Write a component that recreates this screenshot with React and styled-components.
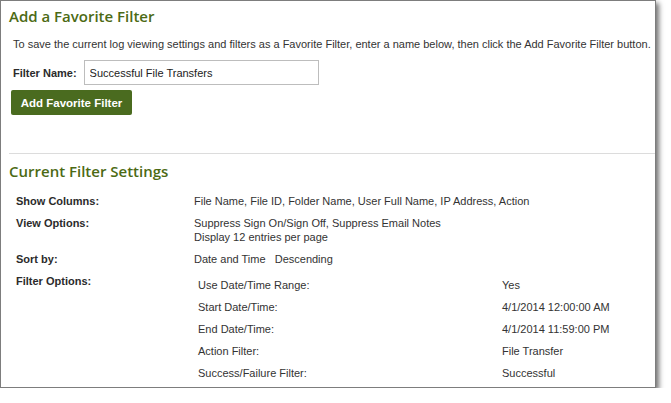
import React from 'react';
import styled, { createGlobalStyle } from 'styled-components';

const GlobalStyle = createGlobalStyle`
    body {
        margin: 0;
        background: #ffffff;
        font-family: "Liberation Sans", Arial, sans-serif;
        color: #333333;
    }
`

const Panel = styled.div`
    width: 654px;
    height: 386px;
    border: 1px solid #7d7d7d;
    box-shadow: 3px 3px 5px rgba(0, 0, 0, 0.55);
    background: #ffffff;
    overflow: hidden;
`

const Section = styled.div`
    padding: ${props => props.top}px 0 0 8px;
`

const Heading = styled.h2`
    margin: 0;
    font-family: "Open Sans", "DejaVu Sans", sans-serif;
    font-size: 15px;
    font-weight: 600;
    line-height: 18px;
    color: #4c6a14;
`

const Description = styled.p`
    margin: 12px 0 0 4px;
    font-size: 11px;
    line-height: 14px;
`

const FormRow = styled.div`
    display: flex;
    align-items: center;
    gap: 7px;
    margin: 9px 0 0 4px;
`

const Label = styled.label`
    font-size: 11px;
    font-weight: bold;
    color: #2b2b2b;
`

const NameInput = styled.input`
    box-sizing: border-box;
    width: 235px;
    height: 25px;
    padding: 0 5px;
    border: 1px solid #bdbdbd;
    font-family: "Liberation Sans", Arial, sans-serif;
    font-size: 11px;
    color: #222222;
    outline: none;
`

const AddButton = styled.button`
    display: block;
    margin: 5px 0 0 2px;
    width: 121px;
    height: 25px;
    border: none;
    border-radius: 2px;
    background: #4a6b1f;
    color: #ffffff;
    font-family: "Liberation Sans", Arial, sans-serif;
    font-size: 11.5px;
    font-weight: bold;
    cursor: pointer;
`

const Divider = styled.hr`
    margin: 38px 0 0 8px;
    border: none;
    border-top: 1px solid #dcdcdc;
`

const Settings = styled.div`
    display: grid;
    grid-template-columns: 178px 1fr;
    row-gap: 8px;
    margin: 14px 0 0 7px;
    font-size: 11px;
    line-height: 14px;
`

const SettingLabel = styled.div`
    font-weight: bold;
    color: #2b2b2b;
`

const SettingValue = styled.div``

const Options = styled.div`
    display: grid;
    grid-template-columns: 304px 1fr;
    row-gap: 8px;
    padding: 4px 0 0 4px;
`

const filterOptions = [
    ['Use Date/Time Range:', 'Yes'],
    ['Start Date/Time:', '4/1/2014 12:00:00 AM'],
    ['End Date/Time:', '4/1/2014 11:59:00 PM'],
    ['Action Filter:', 'File Transfer'],
    ['Success/Failure Filter:', 'Successful'],
]

const App = () => {
    return (
        <>
            <GlobalStyle />
            <Panel>
                <Section top={6}>
                    <Heading>Add a Favorite Filter</Heading>
                    <Description>
                        To save the current log viewing settings and filters as a Favorite Filter, enter a name below, then click the Add Favorite Filter button.
                    </Description>
                    <FormRow>
                        <Label>Filter Name:</Label>
                        <NameInput defaultValue="Successful File Transfers" />
                    </FormRow>
                    <AddButton>Add Favorite Filter</AddButton>
                </Section>
                <Divider />
                <Section top={8}>
                    <Heading>Current Filter Settings</Heading>
                    <Settings>
                        <SettingLabel>Show Columns:</SettingLabel>
                        <SettingValue>File Name, File ID, Folder Name, User Full Name, IP Address, Action</SettingValue>
                        <SettingLabel>View Options:</SettingLabel>
                        <SettingValue>
                            Suppress Sign On/Sign Off, Suppress Email Notes<br />
                            Display 12 entries per page
                        </SettingValue>
                        <SettingLabel>Sort by:</SettingLabel>
                        <SettingValue>Date and Time&nbsp;&nbsp; Descending</SettingValue>
                        <SettingLabel>Filter Options:</SettingLabel>
                        <Options>
                            {filterOptions.map(([name, value]) => (
                                <React.Fragment key={name}>
                                    <SettingValue>{name}</SettingValue>
                                    <SettingValue>{value}</SettingValue>
                                </React.Fragment>
                            ))}
                        </Options>
                    </Settings>
                </Section>
            </Panel>
        </>
    )
}

export default App;
